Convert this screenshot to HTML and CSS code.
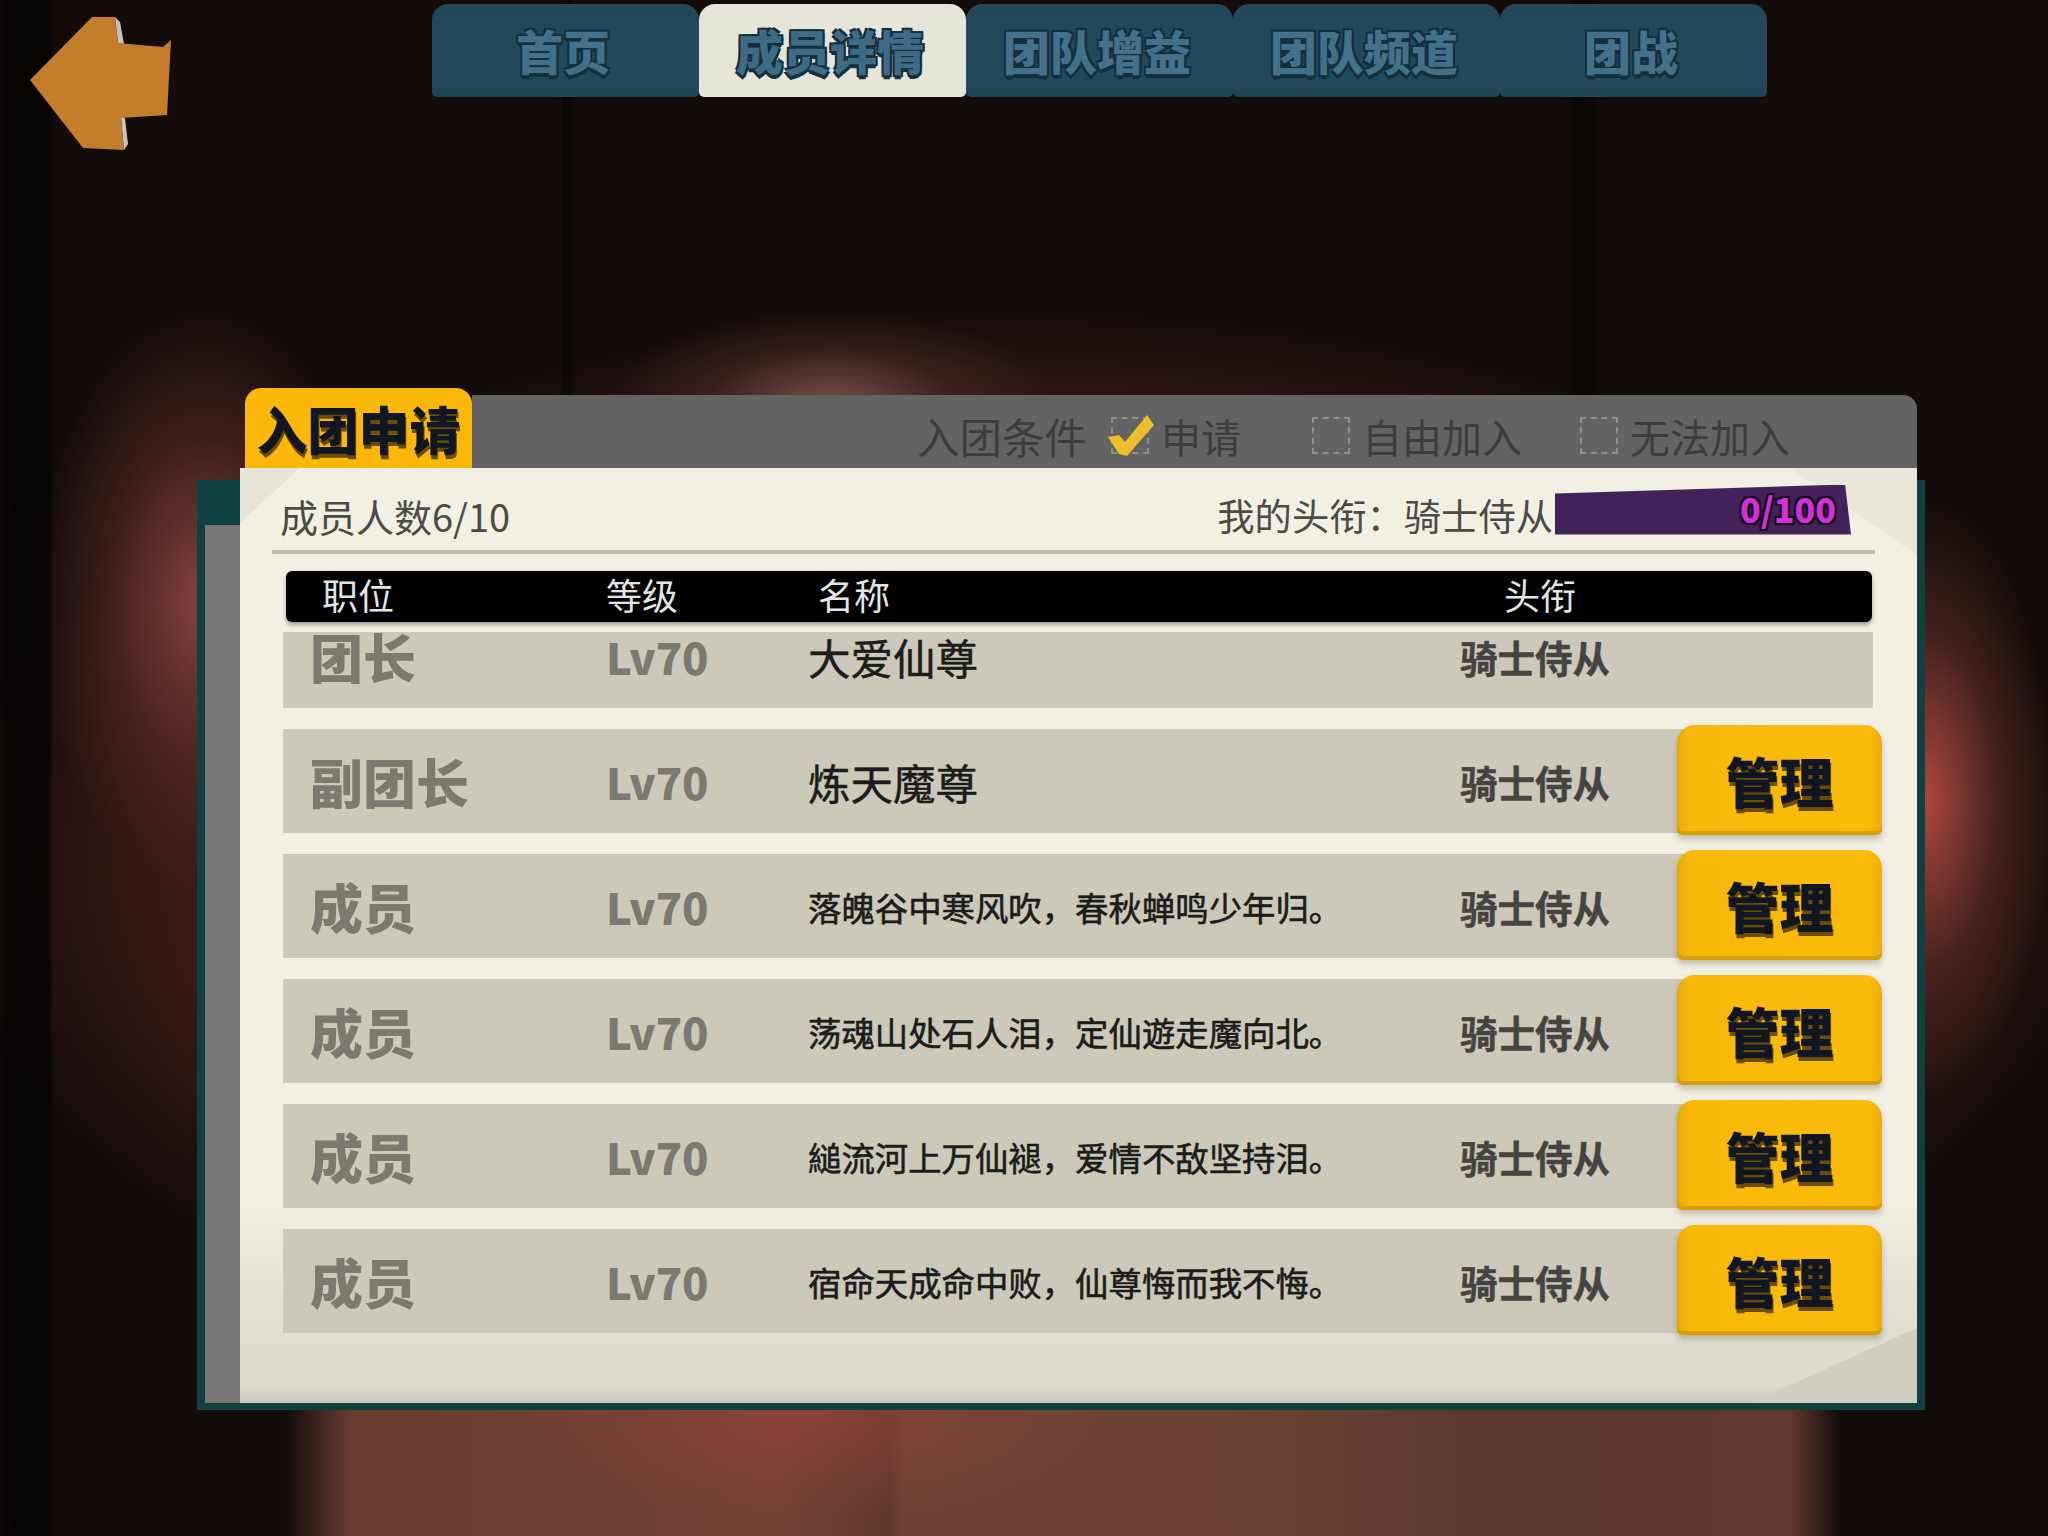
FILE: index.html
```html
<!DOCTYPE html>
<html lang="zh-CN">
<head>
    <meta charset="UTF-8">
    <meta name="viewport" content="width=device-width, initial-scale=1.0">
    <title>成员详情</title>
    <link rel="stylesheet" href="styles.css">
</head>
<body>
    <div class="stage">
        <div class="curtains"></div>

        <div class="topbar">
            <svg class="back" width="141" height="134" viewBox="0 0 141 134">
                <path d="M85 1 L88 27 L94 28 L90 6 Z M91 102 L94 134 L98 128 L95 102 Z" fill="#c9c4bb"/>
                <path d="M0 64 L62 1 L85 1 L88 27 L133 31 L141 24 L137 99 L91 102 L94 134 L53 132 Z" fill="#c47d2a"/>
            </svg>
            <div class="tabs">
                <div class="tab">首页</div>
                <div class="tab tab-active">成员详情</div>
                <div class="tab">团队增益</div>
                <div class="tab">团队频道</div>
                <div class="tab">团战</div>
            </div>
        </div>

        <div class="panel">
            <div class="panel-head">
                <div class="panel-title">入团申请</div>
                <div class="conditions">
                    <span class="cond-label">入团条件</span>
                    <span class="box box-checked">
                        <svg class="tick" width="48" height="42" viewBox="0 0 48 42">
                            <path d="M1 22 L12 20 L18 27 L40 0 L47 10 L20 41 L12 39 Z" fill="#efbc2c"/>
                        </svg>
                    </span>
                    <span class="cond-text">申请</span>
                    <span class="box box-free"></span>
                    <span class="cond-text">自由加入</span>
                    <span class="box box-closed"></span>
                    <span class="cond-text">无法加入</span>
                </div>
            </div>

            <div class="paper-back">
                <div class="paper">
                    <div class="fold fold-left"></div>
                    <div class="fold fold-right"></div>
                    <div class="fold fold-bottom"></div>

                    <div class="info">
                        <span>成员人数6/10</span>
                        <div class="rank">
                            <span>我的头衔：骑士侍从</span>
                            <div class="rank-bar">0/100</div>
                        </div>
                    </div>
                    <div class="divider"></div>

                    <div class="table-head">
                        <span>职位</span>
                        <span>等级</span>
                        <span>名称</span>
                        <span>头衔</span>
                    </div>

                    <div class="rows">
                        <div class="row row-first">
                            <span class="role">团长</span>
                            <span class="level">Lv70</span>
                            <span class="name">大爱仙尊</span>
                            <span class="title">骑士侍从</span>
                        </div>
                        <div class="row">
                            <span class="role">副团长</span>
                            <span class="level">Lv70</span>
                            <span class="name">炼天魔尊</span>
                            <span class="title">骑士侍从</span>
                            <button class="manage">管理</button>
                        </div>
                        <div class="row">
                            <span class="role">成员</span>
                            <span class="level">Lv70</span>
                            <span class="name name-long">落魄谷中寒风吹，春秋蝉鸣少年归。</span>
                            <span class="title">骑士侍从</span>
                            <button class="manage">管理</button>
                        </div>
                        <div class="row">
                            <span class="role">成员</span>
                            <span class="level">Lv70</span>
                            <span class="name name-long">荡魂山处石人泪，定仙遊走魔向北。</span>
                            <span class="title">骑士侍从</span>
                            <button class="manage">管理</button>
                        </div>
                        <div class="row">
                            <span class="role">成员</span>
                            <span class="level">Lv70</span>
                            <span class="name name-long">縋流河上万仙褪，爱情不敌坚持泪。</span>
                            <span class="title">骑士侍从</span>
                            <button class="manage">管理</button>
                        </div>
                        <div class="row">
                            <span class="role">成员</span>
                            <span class="level">Lv70</span>
                            <span class="name name-long">宿命天成命中败，仙尊悔而我不悔。</span>
                            <span class="title">骑士侍从</span>
                            <button class="manage">管理</button>
                        </div>
                    </div>
                </div>
            </div>
        </div>
    </div>
</body>
</html>
```

FILE: styles.css
```css
* {
    box-sizing: border-box;
}

body {
    margin: 0;
    font-family: "Noto Sans CJK SC", "Noto Sans", sans-serif;
    background: #140c0a;
}

.stage {
    position: relative;
    width: 2048px;
    height: 1536px;
    overflow: hidden;
    background-color: #140c0a;
    background-image:
        radial-gradient(ellipse 170px 290px at 205px 600px, rgba(140, 68, 64, 0.95), rgba(92, 44, 40, 0.6) 55%, rgba(50, 20, 20, 0) 100%),
        radial-gradient(ellipse 130px 300px at 1925px 800px, rgba(170, 72, 64, 1), rgba(92, 44, 38, 0.6) 55%, rgba(60, 30, 26, 0) 100%),
        radial-gradient(ellipse 220px 90px at 830px 400px, rgba(116, 76, 70, 1), rgba(70, 40, 36, 0.6) 55%, rgba(40, 20, 18, 0) 100%),
        radial-gradient(ellipse 300px 110px at 810px 1410px, rgba(145, 66, 58, 0.8), rgba(145, 66, 58, 0) 100%),
        linear-gradient(90deg, rgba(100, 60, 50, 0) 285px, #683c30 350px, #764236 780px, #5f382c 890px, #6e4335 905px, #6c4236 1200px, #5c392d 1500px, #62392e 1790px, rgba(60, 34, 28, 0) 1840px),
        radial-gradient(ellipse 1080px 560px at 1024px 870px, #3e1c18 0, #3a1a17 78%, rgba(30, 14, 12, 0) 100%);
    background-repeat: no-repeat;
    background-size: auto, auto, auto, auto, 100% 160px, auto;
    background-position: 0 0, 0 0, 0 0, 0 0, 0 1376px, 0 0;
}

.curtains {
    position: absolute;
    inset: 0;
    background:
        linear-gradient(90deg, transparent 558px, rgba(0, 0, 0, 0.45) 564px, rgba(0, 0, 0, 0.45) 570px, transparent 576px) 0 0 / 100% 400px no-repeat,
        linear-gradient(90deg, transparent 1565px, rgba(0, 0, 0, 0.45) 1574px, rgba(0, 0, 0, 0.45) 1590px, transparent 1604px) 0 0 / 100% 400px no-repeat,
        linear-gradient(90deg, rgba(0, 0, 0, 0.4) 0, rgba(0, 0, 0, 0.7) 12px, rgba(0, 0, 0, 0.7) 48px, rgba(0, 0, 0, 0) 54px);
}

/* top bar */
.topbar {
    position: relative;
    display: flex;
    align-items: flex-start;
    height: 97px;
    padding: 4px 0 0 30px;
}

.back {
    margin-top: 12px;
}

.tabs {
    display: flex;
    margin-left: 261px;
}

.tab {
    width: 267px;
    height: 93px;
    padding-right: 5px;
    background: linear-gradient(180deg, #234859 0, #234a5c 85%, #1f4354 100%);
    border-radius: 16px 16px 5px 5px;
    text-align: center;
    line-height: 92px;
    font-size: 47px;
    font-weight: 900;
    color: #44708a;
    text-shadow: 2px 2px 0 #14303f, -2px -2px 0 #14303f, 2px -2px 0 #14303f, -2px 2px 0 #14303f, 0 4px 0 #14303f;
}

.tab-active {
    background: #e6e5da;
    color: #3f6b85;
}

/* panel */
.panel {
    position: relative;
    margin: 291px 0 0 197px;
    width: 1728px;
}

.panel-head {
    display: flex;
    align-items: flex-end;
    margin-left: 48px;
    height: 80px;
}

.panel-title {
    width: 227px;
    height: 80px;
    background: #fbb80a;
    border-radius: 16px 16px 0 0;
    text-align: center;
    font-size: 51px;
    line-height: 80px;
    font-weight: 900;
    color: #101622;
    text-shadow: 1px 4px 0 #6b4d08;
}

.conditions {
    flex: 1;
    display: flex;
    align-items: center;
    height: 73px;
    padding: 8px 0 0 445px;
    margin-right: 8px;
    background: #636363;
    border-radius: 0 14px 0 0;
    font-size: 40px;
    color: #3d3d3d;
}

.cond-label {
    width: 194px;
    font-size: 42.5px;
    white-space: nowrap;
}

.box {
    position: relative;
    width: 38px;
    height: 37px;
    border: 2px dashed #8f8f8f;
}

.cond-text {
    margin-left: 12px;
}

.box-free {
    margin-left: 71px;
}

.box-closed {
    margin-left: 58px;
}

.tick {
    position: absolute;
    left: -6px;
    top: -4px;
}

.paper-back {
    position: relative;
    height: 930px;
    margin-top: 12px;
    padding: 1px 8px 7px 43px;
    background: #10403f;
}

.paper-back::before {
    content: "";
    position: absolute;
    left: 8px;
    top: 45px;
    bottom: 7px;
    width: 36px;
    background: #787674;
}

.paper {
    position: relative;
    height: 935px;
    margin-top: -13px;
    padding: 0 45px 0 40px;
    background: linear-gradient(180deg, #f2f0e3 0, #f2f0e3 78%, #e2e0d3 90%, #dcdbce 98%, #c9c9bc 100%);
}

.info {
    position: relative;
    display: flex;
    justify-content: space-between;
    align-items: center;
    height: 82px;
    padding-top: 12px;
    font-size: 38px;
    color: #4b4a45;
}

.rank {
    display: flex;
    align-items: center;
    font-size: 37.3px;
    margin-right: 21px;
}

.rank-bar {
    width: 296px;
    height: 50px;
    margin: -11px 0 0 2px;
    padding: 0 15px 0 0;
    background: #43215a;
    clip-path: polygon(0 9px, 98% 0, 100% 100%, 0 100%);
    text-align: right;
    font-size: 34px;
    line-height: 47px;
    font-weight: 900;
    color: #d92be0;
    text-shadow: 2px 2px 0 #111, -2px -2px 0 #111, 2px -2px 0 #111, -2px 2px 0 #111;
}

.divider {
    position: relative;
    height: 4px;
    margin: 0 -3px 0 -8px;
    background: #bdbcb2;
}

.table-head {
    position: relative;
    display: grid;
    grid-template-columns: 284px 212px 686px auto;
    height: 51px;
    margin: 17px 0 0 6px;
    padding: 0 0 5px 36px;
    align-items: center;
    background: #000;
    border-radius: 6px;
    box-shadow: 0 3px 4px rgba(60, 60, 50, 0.45);
    font-size: 36px;
    line-height: 46px;
    color: #e4e4e4;
    z-index: 1;
}

.rows {
    position: relative;
    display: flex;
    flex-direction: column;
    gap: 21px;
    margin: 10px -1px 0 3px;
}

.row {
    display: grid;
    grid-template-columns: 296px 202px 652px 217px auto;
    align-items: center;
    height: 104px;
    padding: 0 0 0 27px;
    background: #ccc9bb;
}

/* first row is scrolled up under the table head */
.row-first {
    height: 76px;
    grid-template-rows: 49px;
    align-content: start;
}

.row-first span {
    line-height: 49px;
}

.role {
    font-size: 53px;
    font-weight: 900;
    color: #7b7970;
}

.level {
    font-size: 43.5px;
    font-weight: 900;
    color: #7b7970;
}

.name {
    font-size: 42.5px;
    color: #1c1c18;
    -webkit-text-stroke: 0.5px #1c1c18;
}

.name-long {
    font-size: 33.4px;
    -webkit-text-stroke: 0.6px #1c1c18;
}

.title {
    font-size: 37.5px;
    font-weight: 700;
    color: #45443f;
    -webkit-text-stroke: 0.5px #45443f;
}

.manage {
    width: 205px;
    height: 110px;
    margin: -4px 0 -2px;
    padding: 0;
    border: none;
    background: linear-gradient(90deg, #e3a80a 0, #f9b90a 6%, #fbbb0a 94%, #e9ad0a 100%);
    border-radius: 18px 18px 6px 6px;
    box-shadow: inset 0 -4px 0 #d79d0a, 0 4px 6px rgba(80, 70, 40, 0.3);
    font-family: inherit;
    font-size: 54px;
    font-weight: 900;
    color: #101622;
    text-shadow: 1px 4px 0 #6b4d08;
}

/* paper corners */
.fold {
    position: absolute;
}

.fold-left {
    left: 0;
    top: 0;
    width: 60px;
    height: 55px;
    background: #e6e4d7;
    clip-path: polygon(0 0, 100% 0, 0 100%);
}

.fold-right {
    right: 0;
    top: 0;
    width: 127px;
    height: 87px;
    background: #e9e7da;
    clip-path: polygon(0 0, 100% 0, 100% 100%);
}

.fold-bottom {
    right: 0;
    bottom: 0;
    width: 167px;
    height: 75px;
    background: #cfcec1;
    clip-path: polygon(0 100%, 100% 0, 100% 100%);
}
```
